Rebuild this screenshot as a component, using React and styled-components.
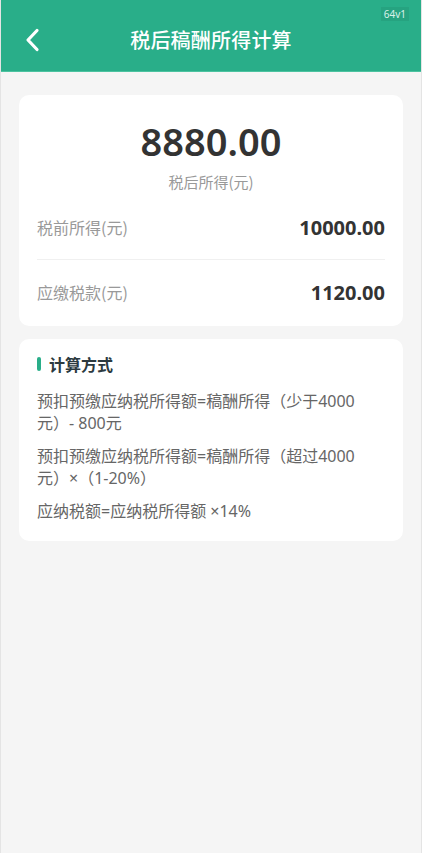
import React from "react";
import styled, { createGlobalStyle } from "styled-components";

const GlobalStyle = createGlobalStyle`
  html, body {
    margin: 0;
    padding: 0;
    background: #f5f5f5;
  }
  body {
    font-family: "Noto Sans", "Noto Sans CJK SC", sans-serif;
  }
`;

const formulas = [
  "预扣预缴应纳税所得额=稿酬所得（少于4000元）- 800元",
  "预扣预缴应纳税所得额=稿酬所得（超过4000元）×（1-20%）",
  "应纳税额=应纳税所得额 ×14%",
];

const rows = [
  { label: "税前所得(元)", value: "10000.00" },
  { label: "应缴税款(元)", value: "1120.00" },
];

const App = () => {
  return (
    <>
      <GlobalStyle />
      <Page>
        <Header>
          <BackBtn aria-label="返回">
            <svg width="16" height="24" viewBox="0 0 16 24" fill="none">
              <path
                d="M12 2.5 L3 12 L12 21.5"
                stroke="#fff"
                strokeWidth="3.2"
                strokeLinecap="round"
                strokeLinejoin="round"
              />
            </svg>
          </BackBtn>
          <Title>税后稿酬所得计算</Title>
          <Version>64v1</Version>
        </Header>

        <Content>
          <Card>
            <Result>
              <Amount>8880.00</Amount>
              <AmountLabel>税后所得(元)</AmountLabel>
            </Result>
            {rows.map((row, i) => (
              <Row key={row.label} $divider={i > 0}>
                <RowLabel>{row.label}</RowLabel>
                <RowValue>{row.value}</RowValue>
              </Row>
            ))}
          </Card>

          <Card $pad>
            <SectionTitle>计算方式</SectionTitle>
            {formulas.map((f) => (
              <Formula key={f}>{f}</Formula>
            ))}
          </Card>
        </Content>
      </Page>
    </>
  );
};

export default App;

const Page = styled.div`
  min-height: 853px;
  box-sizing: border-box;
  background: #f5f5f5;
  border-left: 1px solid #e4e4e4;
  border-right: 1px solid #e4e4e4;
`;

const Header = styled.div`
  position: relative;
  height: 72px;
  box-sizing: border-box;
  padding-top: 8px;
  display: flex;
  align-items: center;
  justify-content: center;
  background: #29ae89;
  border-bottom: 1px solid #4cc3a0;
`;

const BackBtn = styled.button`
  position: absolute;
  left: 22px;
  top: 28px;
  width: 20px;
  height: 24px;
  padding: 0;
  border: none;
  background: none;
  display: flex;
  align-items: center;
  justify-content: center;
  cursor: pointer;
`;

const Title = styled.div`
  color: #fff;
  font-family: "Noto Sans CJK SC", sans-serif;
  font-size: 20px;
  font-weight: 500;
  line-height: 28px;
  letter-spacing: 0.2px;
`;

const Version = styled.div`
  position: absolute;
  top: 7px;
  right: 12px;
  padding: 1px 3px;
  background: rgba(0, 0, 0, 0.06);
  color: #d8f1e9;
  font-family: "Noto Sans", sans-serif;
  font-size: 10px;
  line-height: 12px;
`;

const Content = styled.div`
  padding: 23px 18px 0 18px;
  display: flex;
  flex-direction: column;
  gap: 13px;
`;

const Card = styled.div`
  background: #fff;
  border-radius: 10px;
  padding: ${(p) => (p.$pad ? "14px 18px 19px" : "0 18px 2px")};
`;

const Result = styled.div`
  padding-top: 24px;
  padding-bottom: 2px;
  display: flex;
  flex-direction: column;
  align-items: center;
`;

const Amount = styled.div`
  color: #333;
  font-family: "Noto Sans", sans-serif;
  font-size: 38px;
  font-weight: 600;
  line-height: 44px;
`;

const AmountLabel = styled.div`
  margin-top: 8px;
  color: #999;
  font-family: "Noto Sans CJK SC", sans-serif;
  font-size: 15px;
  line-height: 22px;
`;

const Row = styled.div`
  height: 64px;
  display: flex;
  align-items: center;
  justify-content: space-between;
  border-top: ${(p) => (p.$divider ? "1px solid #f0f0f0" : "none")};
`;

const RowLabel = styled.div`
  color: #999;
  font-family: "Noto Sans CJK SC", sans-serif;
  font-size: 16px;
`;

const RowValue = styled.div`
  color: #333;
  font-family: "Noto Sans", sans-serif;
  font-size: 20px;
  font-weight: 700;
`;

const SectionTitle = styled.div`
  display: flex;
  align-items: center;
  gap: 8px;
  color: #2c3a40;
  font-family: "Noto Sans CJK SC", sans-serif;
  font-size: 16px;
  font-weight: 700;
  line-height: 22px;
  margin-bottom: 15px;

  &::before {
    content: "";
    width: 4px;
    height: 14px;
    border-radius: 2px;
    background: #29ae89;
  }
`;

const Formula = styled.div`
  margin-top: 11px;
  padding-right: 10px;
  color: #666;
  font-family: "Noto Sans", "Noto Sans CJK SC", sans-serif;
  font-size: 16px;
  line-height: 22px;
`;
